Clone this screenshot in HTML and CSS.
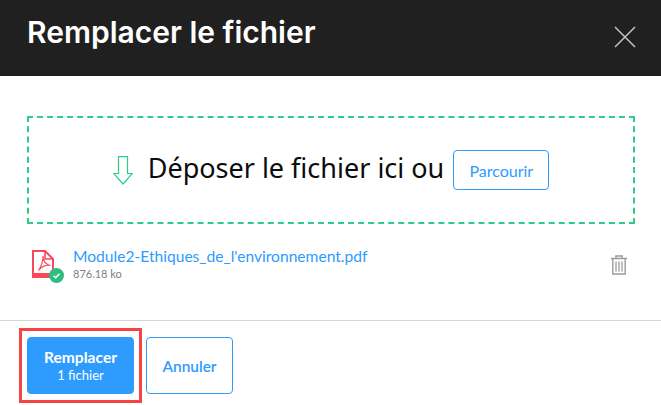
FILE: index.html
```html
<!DOCTYPE html>
<html lang="fr">
<head>
<meta charset="utf-8">
<title>Remplacer le fichier</title>
<link rel="stylesheet" href="styles.css">
</head>
<body>
<div class="dialog">
  <header class="head">
    <h1 class="title">Remplacer le fichier</h1>
    <svg class="close" width="22" height="22" viewBox="0 0 22 22"><path d="M1 1L21 21M21 1L1 21" stroke="#c4c4c4" stroke-width="1.5" fill="none"/></svg>
  </header>
  <main class="body">
    <div class="drop">
      <svg class="arrow" width="20" height="29" viewBox="0 0 20 29"><path d="M5.5 .7H14.5V17.5H19.3L10 28L.7 17.5H5.5Z" fill="none" stroke="#2ecc87" stroke-width="1.2"/></svg>
      <span class="drop-text">Déposer le fichier ici ou</span>
      <button class="btn browse">Parcourir</button>
    </div>
    <div class="file">
      <div class="file-icon">
        <svg width="37" height="37" viewBox="0 0 37 37">
          <path d="M5 4H17L25 12V30H5Z" fill="#fff" stroke="#f8485e" stroke-width="2"/>
          <path d="M17 4V12H25" fill="none" stroke="#f8485e" stroke-width="1.6"/>
          <rect x="4" y="26" width="22" height="5" fill="#f8485e"/>
          <path d="M10.5 23.5C13 20 15.5 13 15 9C14.5 13 18 18 22.5 18.5C18 17.5 13 19.5 10.5 23.5Z" fill="none" stroke="#f8485e" stroke-width="1.2"/>
          <circle cx="28.5" cy="28.5" r="7.5" fill="#2dbd7e"/>
          <path d="M25.5 28.8L27.7 30.8L31.5 26.8" fill="none" stroke="#fff" stroke-width="1.5"/>
        </svg>
      </div>
      <div class="file-info">
        <a class="file-name">Module2-Ethiques_de_l'environnement.pdf</a>
        <span class="file-size">876.18 ko</span>
      </div>
      <svg class="trash" width="18" height="20" viewBox="0 0 18 20">
        <path d="M6 2.5V1H12V2.5M1 3.5H17" fill="none" stroke="#9a9a9a" stroke-width="1.6"/>
        <path d="M2.8 4V19H15.2V4" fill="none" stroke="#9a9a9a" stroke-width="1.4"/>
        <path d="M6 6.5V16.5M9 6.5V16.5M12 6.5V16.5" fill="none" stroke="#a8a8a8" stroke-width="1.5"/>
      </svg>
    </div>
  </main>
  <footer class="foot">
    <div class="mark">
      <button class="btn primary"><b>Remplacer</b><small>1 fichier</small></button>
    </div>
    <button class="btn cancel">Annuler</button>
  </footer>
</div>
</body>
</html>
```
FILE: styles.css
```css
* { box-sizing: border-box; }
html, body { margin: 0; padding: 0; background: #fff; }
body { width: 661px; height: 405px; overflow: hidden; font-family: Lato, "Noto Sans", sans-serif; }
.dialog { display: flex; flex-direction: column; height: 405px; }
.head { height: 76px; background: #202020; display: flex; align-items: center; justify-content: space-between; padding: 0 25px 0 27px; flex: none; }
.title { margin: 0 0 13px; color: #fff; font-size: 30px; font-weight: 600; line-height: 38px; font-family: Inter, "Noto Sans", sans-serif; }
.close { margin-bottom: 3px; }
.body { flex: 1; padding: 40px 26px 0 27px; border-bottom: 1px solid #d8d8d8; display: flex; flex-direction: column; }
.drop { height: 108px; border: 2px dashed #2ecc87; display: flex; align-items: center; justify-content: center; }
.arrow { margin-right: 15px; }
.drop-text { font-size: 27px; color: #0c0c0c; margin: 0 9px 5px 0; font-family: "Noto Sans", sans-serif; }
.btn { font-family: Lato, "Noto Sans", sans-serif; background: #fff; border: 1px solid #2e9bff; border-radius: 4px; color: #2e9bff; padding: 0; cursor: pointer; }
.browse { width: 96px; height: 40px; font-size: 16px; }
.file { display: flex; align-items: flex-start; padding: 23px 7px 0 1px; }
.file-icon { width: 45px; flex: none; height: 42px; }
.file-info { flex: 1; display: flex; flex-direction: column; margin-top: -1px; }
.file-name { color: #2e9bff; font-size: 15.6px; line-height: 20px; }
.file-size { color: #808080; font-size: 11px; line-height: 15px; }
.trash { margin-top: 8px; }
.foot { height: 84px; flex: none; display: flex; align-items: flex-start; padding: 7px 0 0 19px; gap: 4px; }
.mark { border: 3px solid #f44545; padding: 6px 5px; display: flex; }
.primary { width: 107px; height: 57px; background: #2e9bff; color: #fff; display: flex; flex-direction: column; align-items: center; justify-content: center; }
.primary b { font-size: 15.6px; font-weight: 700; line-height: 19px; }
.primary small { font-size: 13px; line-height: 16px; }
.cancel { width: 87px; height: 57px; font-size: 15.4px; font-weight: 600; margin-top: 9px; }
```
